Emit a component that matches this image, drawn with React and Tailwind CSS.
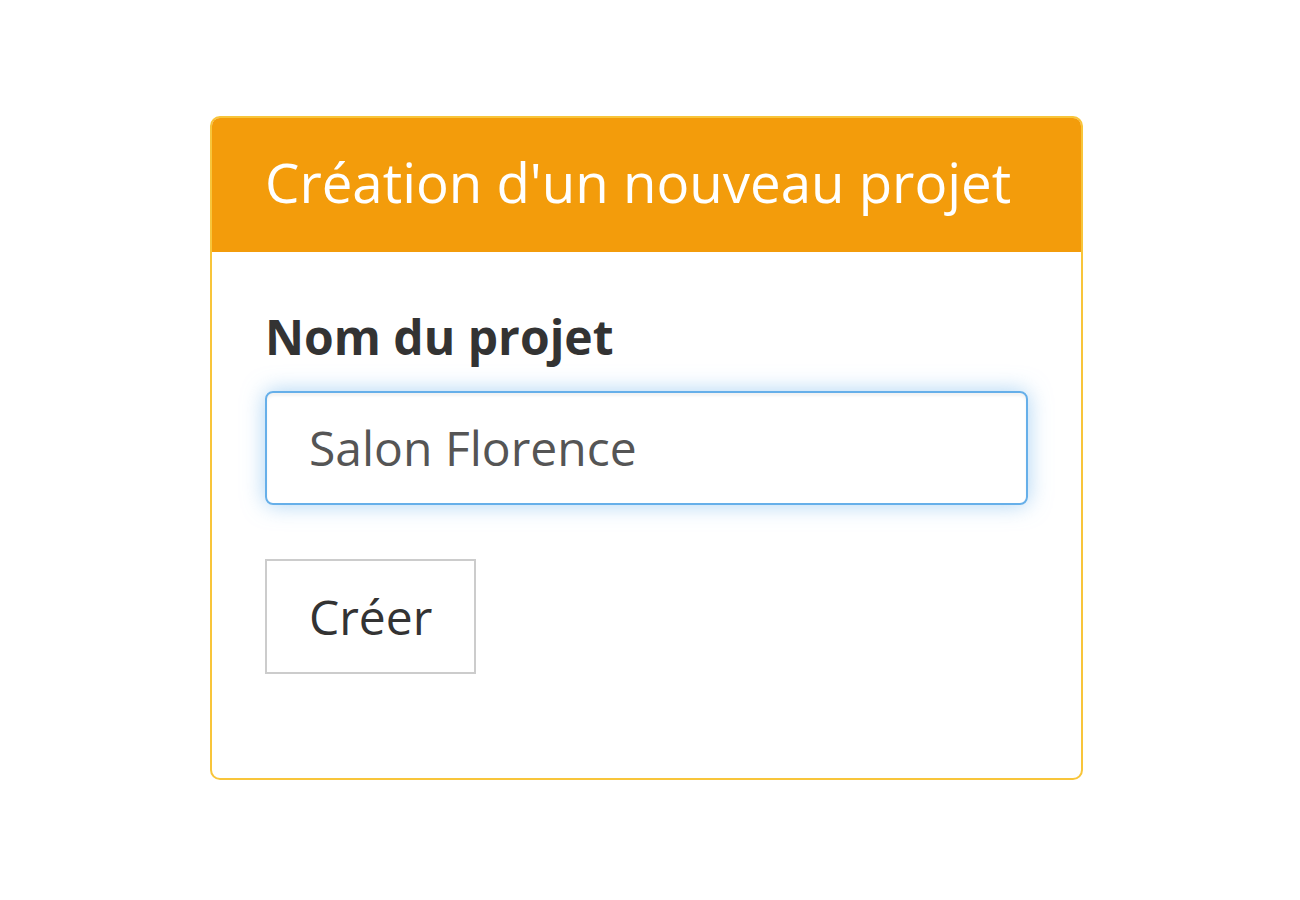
export default function App() {
  return (
    <div
      className="w-[1300px] h-[900px] bg-white pt-[116px] pl-[210px]"
      style={{ fontFamily: '"Open Sans", "Noto Sans", sans-serif' }}
    >
      <div className="w-[873px] h-[664px] border-2 border-[#f8c53a] rounded-[10px] overflow-hidden flex flex-col">
        {/* Header */}
        <div className="h-[134px] shrink-0 bg-[#f39c0b] flex items-center px-[53px] pb-[6px]">
          <h3 className="text-[54.6px] leading-[60px] text-white font-normal">
            Création d'un nouveau projet
          </h3>
        </div>

        {/* Body */}
        <div className="px-[53px] pt-[51px]">
          <label className="block text-[48px] leading-[68px] font-bold text-[#333]">
            Nom du projet
          </label>
          <div className="mt-[20px] h-[114px] border-2 border-[#66afe9] rounded-[8px] flex items-center px-[42px] shadow-[inset_0_3px_3px_rgba(0,0,0,0.05),0_0_22px_rgba(102,175,233,0.55)]">
            <span className="text-[48px] leading-[68px] text-[#555]">
              Salon Florence
            </span>
          </div>
          <button className="mt-[54px] h-[115px] border-2 border-[#cccccc] bg-white px-[42px] flex items-center text-[48px] leading-[68px] text-[#333]">
            Créer
          </button>
        </div>
      </div>
    </div>
  );
}
